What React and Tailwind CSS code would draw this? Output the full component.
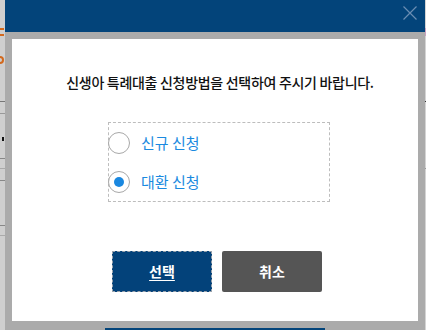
export default function App() {
  const font = { fontFamily: '"Noto Sans CJK KR", "Noto Sans", sans-serif' };
  return (
    <div className="w-[426px] h-[330px] bg-[#cdcdcd] flex overflow-hidden" style={font}>
      {/* left strip of page behind */}
      <div className="w-[5px] h-full relative bg-[#cfcfcf]">
        <div className="absolute left-0 top-[28px] w-[4px] h-[8px] border-t-2 border-b-2 border-[#d2691e]" />
        <div className="absolute left-0 top-[56px] w-[4px] h-[8px] border-2 border-l-0 border-[#d2691e] rounded-r" />
        <div className="absolute left-0 top-[101px] w-[5px] h-px bg-[#777]" />
        <div className="absolute left-0 top-[113px] w-[5px] h-px bg-[#999]" />
        <div className="absolute left-[2px] top-[137px] w-[2px] h-[4px] bg-[#111]" />
        <div className="absolute left-0 top-[158px] w-[5px] h-px bg-[#888]" />
        <div className="absolute left-0 top-[168px] w-[5px] h-px bg-[#aaa]" />
        <div className="absolute left-0 top-[180px] w-[5px] h-px bg-[#888]" />
        <div className="absolute left-0 top-[225px] w-[5px] h-px bg-[#888]" />
        <div className="absolute left-0 top-[235px] w-[5px] h-px bg-[#aaa]" />
      </div>

      {/* dialog */}
      <div className="w-[420px] h-full flex flex-col">
        <div className="h-[32px] bg-[#03447a] flex justify-end items-start pt-[6px] pr-[8px]">
          <svg width="14" height="14" viewBox="0 0 14 14">
            <path d="M0.5 0.5 L13.5 13.5 M13.5 0.5 L0.5 13.5" stroke="#6a8db3" strokeWidth="1.2" fill="none" />
          </svg>
        </div>
        <div className="flex-1 bg-[#ababab] px-[7px] pt-[7px] flex flex-col">
          <div className="h-[282px] bg-white flex flex-col">
            <p className="pt-[33px] pl-[10px] text-center text-[14px] tracking-[-0.3px] leading-[20px] text-[#111] font-medium">
              신생아 특례대출 신청방법을 선택하여 주시기 바랍니다.
            </p>
            <div className="mt-[30px] ml-[96px] w-[222px] h-[80px] border border-dashed border-[#bdbdbd] flex flex-col py-[9px] gap-[17px]">
              <div className="flex items-center h-[22px] -ml-px">
                <span className="w-[22px] h-[22px] rounded-full border-[1.5px] border-[#a8a8a8] bg-white" />
                <span className="ml-[11px] text-[15px] text-[#1a8ae0]">신규 신청</span>
              </div>
              <div className="flex items-center h-[22px] -ml-px">
                <span className="w-[22px] h-[22px] rounded-full border-[1.5px] border-[#a8a8a8] bg-white flex items-center justify-center">
                  <span className="w-[10px] h-[10px] rounded-full bg-[#1a88e0]" />
                </span>
                <span className="ml-[11px] text-[15px] text-[#1a8ae0]">대환 신청</span>
              </div>
            </div>
            <div className="mt-[49px] ml-[100px] flex gap-[10px]">
              <button className="w-[100px] h-[41px] bg-[#03427a] border border-dashed border-[#9aa3ad] text-white text-[14px] font-bold underline underline-offset-[3px]">
                선택
              </button>
              <button className="w-[100px] h-[41px] bg-[#555555] rounded-[2px] text-white text-[14px] font-bold">
                취소
              </button>
            </div>
          </div>
          <div className="flex-1 flex items-end">
            <div className="ml-[93px] w-[220px] h-[2px] bg-[#03447a]" />
          </div>
        </div>
      </div>

      {/* right strip */}
      <div className="w-px h-full relative bg-[#d4d4d4]">
        <div className="absolute top-[28px] left-0 w-px h-[8px] bg-[#c9a0c0]" />
        <div className="absolute top-[101px] left-0 w-px h-px bg-[#333]" />
        <div className="absolute top-[168px] left-0 w-px h-px bg-[#999]" />
      </div>
    </div>
  );
}
